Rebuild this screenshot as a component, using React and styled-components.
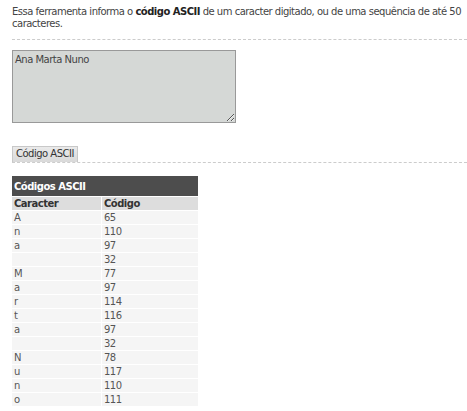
import React from "react";
import styled, { createGlobalStyle } from "styled-components";

const Global = createGlobalStyle`
  html, body { margin: 0; padding: 0; background: #fff; }
  body {
    font-family: "DejaVu Sans", Verdana, sans-serif;
    font-size: 10px;
    letter-spacing: -0.5px;
    color: #444;
  }
`;

const Page = styled.div`
  padding: 6px 0 0 12px;
`;

const Intro = styled.p`
  margin: 0;
  line-height: 12px;
  padding-right: 4px;
  b { color: #222; }
`;

const Divider = styled.div`
  border-top: 1px dashed #ccc;
  margin-top: ${(p) => p.$mt}px;
`;

const Form = styled.div`
  padding-top: 10px;
`;

const Area = styled.textarea`
  box-sizing: border-box;
  width: 224px;
  height: 73px;
  background: #d5d8d6;
  border: 1px solid #999;
  font-family: inherit;
  font-size: 10px;
  letter-spacing: -0.5px;
  color: #444;
  padding: 3px 2px;
  margin: 0;
  display: block;
  resize: both;
`;

const ButtonRow = styled.div`
  margin-top: 23px;
  border-bottom: 1px dashed #ccc;
  display: flex;
`;

const Button = styled.button`
  font-family: inherit;
  font-size: 10px;
  letter-spacing: -0.5px;
  color: #333;
  background: linear-gradient(#eaeaea, #d9d9d9);
  border: 1px solid #c8c8c8;
  border-bottom: none;
  padding: 1px 3px 2px;
  height: 16px;
  line-height: 12px;
  margin: 0;
`;

const Table = styled.table`
  margin-top: 12px;
  border-collapse: separate;
  border-spacing: 0 1px;
  width: 186px;
  font-size: 10px;
`;

const Caption = styled.th`
  background: #4d4d4d;
  color: #fff;
  text-align: left;
  font-weight: bold;
  height: 20px;
  padding: 0 2px;
`;

const HeadCell = styled.th`
  background: #dddddd;
  color: #333;
  text-align: left;
  font-weight: bold;
  height: 13px;
  padding: 0 2px;
  line-height: 13px;
  border-left: ${(p) => (p.$second ? "1px solid #fff" : "none")};
`;

const Cell = styled.td`
  background: #f5f5f5;
  color: #555;
  height: 13px;
  padding: 0 2px;
  line-height: 13px;
  width: ${(p) => (p.$first ? "85px" : "auto")};
  border-left: ${(p) => (p.$second ? "1px solid #fff" : "none")};
`;

const text = "Ana Marta Nuno";

export default function App() {
  return (
    <Page>
      <Global />
      <Intro>
        Essa ferramenta informa o <b>código ASCII</b> de um caracter digitado, ou de uma sequência de até 50 caracteres.
      </Intro>
      <Divider $mt={9} />
      <Form>
        <Area defaultValue={text} />
        <ButtonRow>
          <Button>Código ASCII</Button>
        </ButtonRow>
      </Form>
      <Table>
        <thead>
          <tr>
            <Caption colSpan={2}>Códigos ASCII</Caption>
          </tr>
          <tr>
            <HeadCell>Caracter</HeadCell>
            <HeadCell $second>Código</HeadCell>
          </tr>
        </thead>
        <tbody>
          {text.split("").map((c, i) => (
            <tr key={i}>
              <Cell $first>{c}</Cell>
              <Cell $second>{c.charCodeAt(0)}</Cell>
            </tr>
          ))}
        </tbody>
      </Table>
    </Page>
  );
}
